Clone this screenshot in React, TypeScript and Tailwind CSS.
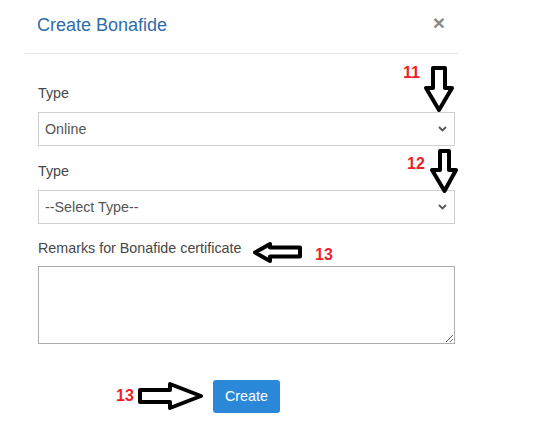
import React from "react";

function Chevron() {
  return (
    <svg width="9" height="6" viewBox="0 0 9 6" className="absolute right-[7px] top-1/2 -translate-y-1/2">
      <polyline points="1,1 4.5,4.5 8,1" fill="none" stroke="#555" strokeWidth="1.8" />
    </svg>
  );
}

function FakeSelect({ value }: { value: string }) {
  return (
    <div className="relative h-[34px] w-[417px] border border-[#cfcfcf] bg-white pl-[6px] text-[14.3px] leading-[32px] text-[#555]">
      {value}
      <Chevron />
    </div>
  );
}

function RedNum({ n, x, y }: { n: string; x: string; y: string }) {
  return (
    <div className={`absolute ${x} ${y} text-[16px] font-bold leading-[16px] text-[#ee1f2a]`}>{n}</div>
  );
}

export default function App() {
  return (
    <div
      className="relative h-[434px] w-[535px] overflow-hidden bg-white"
      style={{ fontFamily: '"Liberation Sans", Arial, sans-serif' }}
    >
      <div className="ml-[25px] flex h-[54px] w-[434px] items-start justify-between border-b border-[#e5e5e5]">
        <div className="pl-[12px] pt-[15px] text-[18px] leading-[20px] text-[#2f6cab]">Create Bonafide</div>
        <div className="pr-[14px] pt-[12px] text-[21px] font-bold leading-[21px] text-[#8a8a8a]">×</div>
      </div>

      <div className="ml-[38px] w-[417px] pt-[29px]">
        <div className="text-[14.3px] leading-[20px] text-[#474747]">Type</div>
        <div className="mt-[9px]">
          <FakeSelect value="Online" />
        </div>
        <div className="mt-[15px] text-[14.3px] leading-[20px] text-[#474747]">Type</div>
        <div className="mt-[9px]">
          <FakeSelect value="--Select Type--" />
        </div>
        <div className="mt-[14px] text-[14.3px] leading-[20px] text-[#474747]">Remarks for Bonafide certificate</div>
        <textarea className="mt-[8px] block h-[78px] w-[417px] border border-[#adadad] bg-white outline-none" />
        <button className="ml-[175px] mt-[36px] h-[33px] w-[67px] rounded-[3px] bg-[#2b88d8] text-[14.3px] text-white">
          Create
        </button>
      </div>

      <RedNum n="11" x="left-[403px]" y="top-[65px]" />
      <RedNum n="12" x="left-[407px]" y="top-[156px]" />
      <RedNum n="13" x="left-[315px]" y="top-[247px]" />
      <RedNum n="13" x="left-[116px]" y="top-[388px]" />

      <svg className="absolute left-[423px] top-[64px]" width="32" height="50" viewBox="0 0 32 50">
        <path d="M10 24 V4 H22 V24 H29 L16 46 L3 24 Z" fill="white" stroke="black" strokeWidth="4" strokeLinejoin="round" />
      </svg>
      <svg className="absolute left-[429px] top-[148px]" width="30" height="46" viewBox="0 0 30 46">
        <path d="M11 22 V3 H20 V22 H27 L15.5 43 L3 22 Z" fill="white" stroke="black" strokeWidth="4" strokeLinejoin="round" />
      </svg>
      <svg className="absolute left-[251px] top-[240px]" width="54" height="25" viewBox="0 0 54 25">
        <path d="M4 12.5 L19 4 V7.5 H49 V16.5 H19 V21 Z" fill="white" stroke="black" strokeWidth="4" strokeLinejoin="round" />
      </svg>
      <svg className="absolute left-[136px] top-[380px]" width="70" height="32" viewBox="0 0 70 32">
        <path d="M4 10 H34 V4 L65 16 L34 28 V22 H4 Z" fill="white" stroke="black" strokeWidth="4" strokeLinejoin="round" />
      </svg>
    </div>
  );
}
